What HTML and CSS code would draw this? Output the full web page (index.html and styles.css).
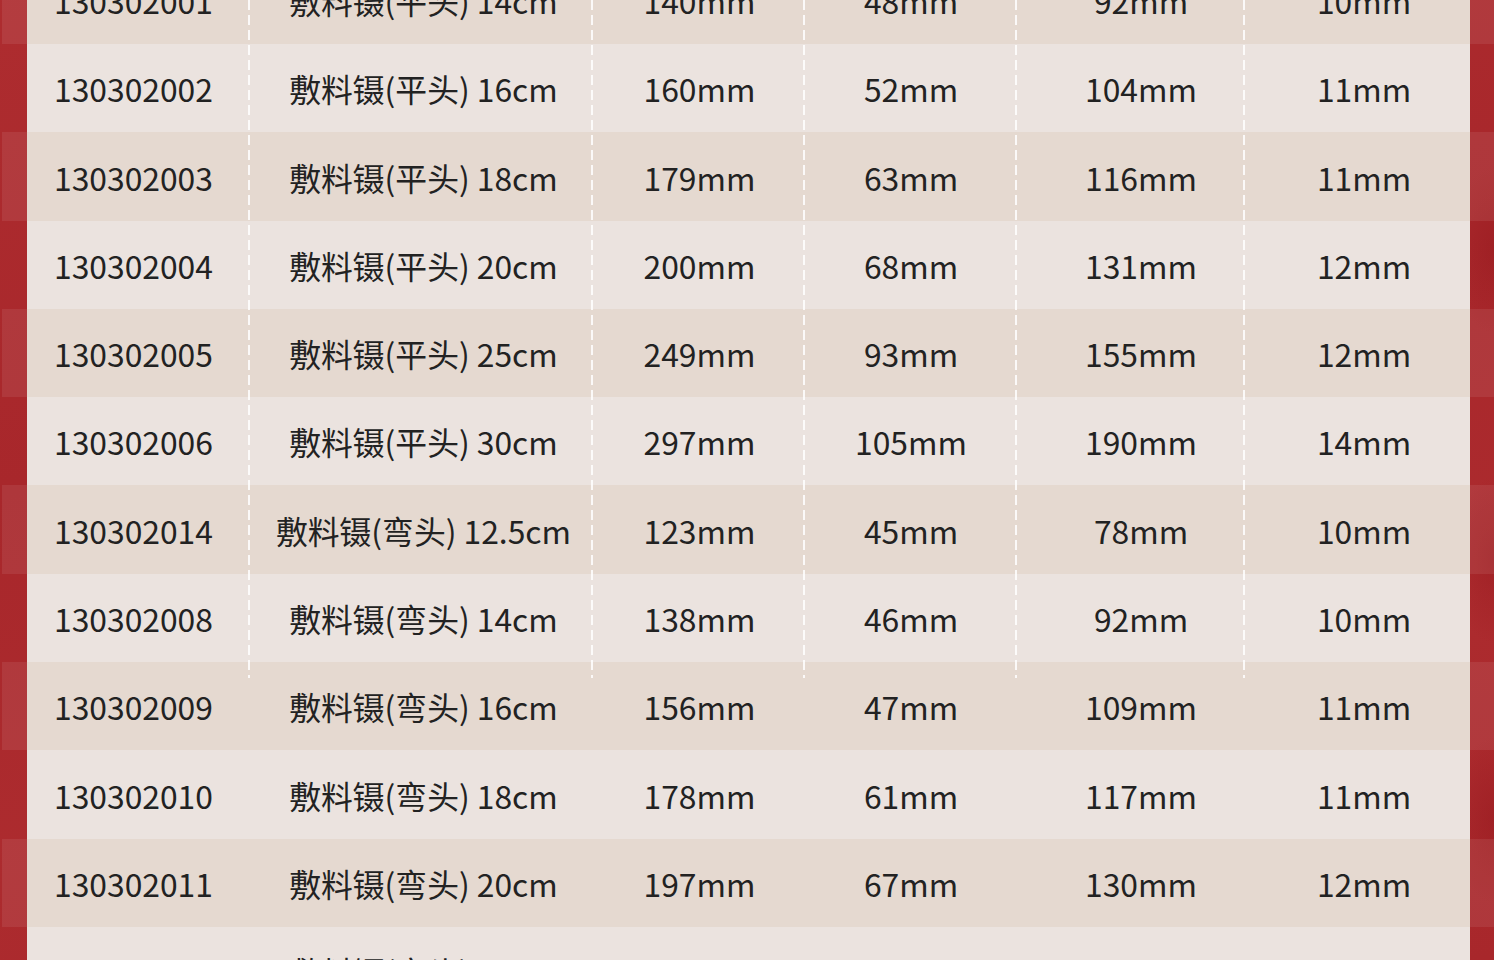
FILE: index.html
```html
<!DOCTYPE html>
<html lang="zh-CN">
<head>
<meta charset="utf-8">
<title>敷料镊规格表</title>
<link rel="stylesheet" href="styles.css">
</head>
<body>
<div class="page">
  <div class="table">
    <div class="row dark"><div class="cells"><span>130302001</span><span>敷料镊(平头) 14cm</span><span>140mm</span><span>48mm</span><span>92mm</span><span>10mm</span></div></div>
    <div class="row light"><div class="cells"><span>130302002</span><span>敷料镊(平头) 16cm</span><span>160mm</span><span>52mm</span><span>104mm</span><span>11mm</span></div></div>
    <div class="row dark"><div class="cells"><span>130302003</span><span>敷料镊(平头) 18cm</span><span>179mm</span><span>63mm</span><span>116mm</span><span>11mm</span></div></div>
    <div class="row light"><div class="cells"><span>130302004</span><span>敷料镊(平头) 20cm</span><span>200mm</span><span>68mm</span><span>131mm</span><span>12mm</span></div></div>
    <div class="row dark"><div class="cells"><span>130302005</span><span>敷料镊(平头) 25cm</span><span>249mm</span><span>93mm</span><span>155mm</span><span>12mm</span></div></div>
    <div class="row light"><div class="cells"><span>130302006</span><span>敷料镊(平头) 30cm</span><span>297mm</span><span>105mm</span><span>190mm</span><span>14mm</span></div></div>
    <div class="row dark"><div class="cells"><span>130302014</span><span>敷料镊(弯头) 12.5cm</span><span>123mm</span><span>45mm</span><span>78mm</span><span>10mm</span></div></div>
    <div class="row light"><div class="cells"><span>130302008</span><span>敷料镊(弯头) 14cm</span><span>138mm</span><span>46mm</span><span>92mm</span><span>10mm</span></div></div>
    <div class="row dark"><div class="cells"><span>130302009</span><span>敷料镊(弯头) 16cm</span><span>156mm</span><span>47mm</span><span>109mm</span><span>11mm</span></div></div>
    <div class="row light"><div class="cells"><span>130302010</span><span>敷料镊(弯头) 18cm</span><span>178mm</span><span>61mm</span><span>117mm</span><span>11mm</span></div></div>
    <div class="row dark"><div class="cells"><span>130302011</span><span>敷料镊(弯头) 20cm</span><span>197mm</span><span>67mm</span><span>130mm</span><span>12mm</span></div></div>
    <div class="row light"><div class="cells"><span>130302012</span><span>敷料镊(弯头) 25cm</span><span>246mm</span><span>88mm</span><span>158mm</span><span>12mm</span></div></div>
  </div>
  <div class="guides" aria-hidden="true">
    <i class="g1"></i><i class="g2"></i><i class="g3"></i><i class="g4"></i><i class="g5"></i>
  </div>
</div>
</body>
</html>
```

FILE: styles.css
```css
html, body {
  margin: 0;
  padding: 0;
  height: 100%;
  overflow: hidden;
}
body {
  background-color: #a8272b;
  background-image:
    radial-gradient(ellipse 60px 120px at 1494px 250px, rgba(150,25,30,0.5), transparent 70%),
    radial-gradient(ellipse 60px 120px at 1494px 560px, rgba(150,25,30,0.5), transparent 70%),
    radial-gradient(ellipse 60px 120px at 1494px 820px, rgba(150,25,30,0.5), transparent 70%),
    linear-gradient(170deg, rgba(190,60,60,0.25) 0%, transparent 40%, rgba(190,60,60,0.2) 70%, transparent 100%);
  font-family: "Noto Sans CJK SC", "Noto Sans", sans-serif;
  color: #222;
}
.page {
  position: relative;
  display: flow-root;
  height: 960px;
}
.table {
  display: flex;
  flex-direction: column;
  margin-top: -44.3px;
}
.row {
  height: 88.3px;
  padding: 0 0 0 25px;
  display: flex;
}
.row.dark {
  margin-left: 2px;
  background: rgba(255, 255, 255, 0.08);
}
.row.light {
  padding-left: 27px;
}
.cells {
  width: 1443px;
  display: grid;
  grid-template-columns: 213px 367px 185px 238px 222px 218px;
  align-items: center;
  font-size: 31.8px;
  line-height: 1;
  white-space: nowrap;
}
.row.dark .cells {
  background: #e5d9d0;
}
.row.light .cells {
  background: #ebe3df;
}
.cells span {
  text-align: center;
  padding-top: 2px;
}
.cells span:last-child {
  padding-left: 6px;
}
.guides {
  position: absolute;
  left: 0;
  top: 0;
  width: 1494px;
  height: 678px;
  pointer-events: none;
}
.guides i {
  position: absolute;
  top: 0;
  width: 2px;
  height: 100%;
  background: repeating-linear-gradient(to bottom, rgba(255,255,255,0.85) 0 10px, transparent 10px 15px);
}
.guides .g1 { left: 248px; }
.guides .g2 { left: 591px; }
.guides .g3 { left: 803px; }
.guides .g4 { left: 1015px; }
.guides .g5 { left: 1243px; }
```
